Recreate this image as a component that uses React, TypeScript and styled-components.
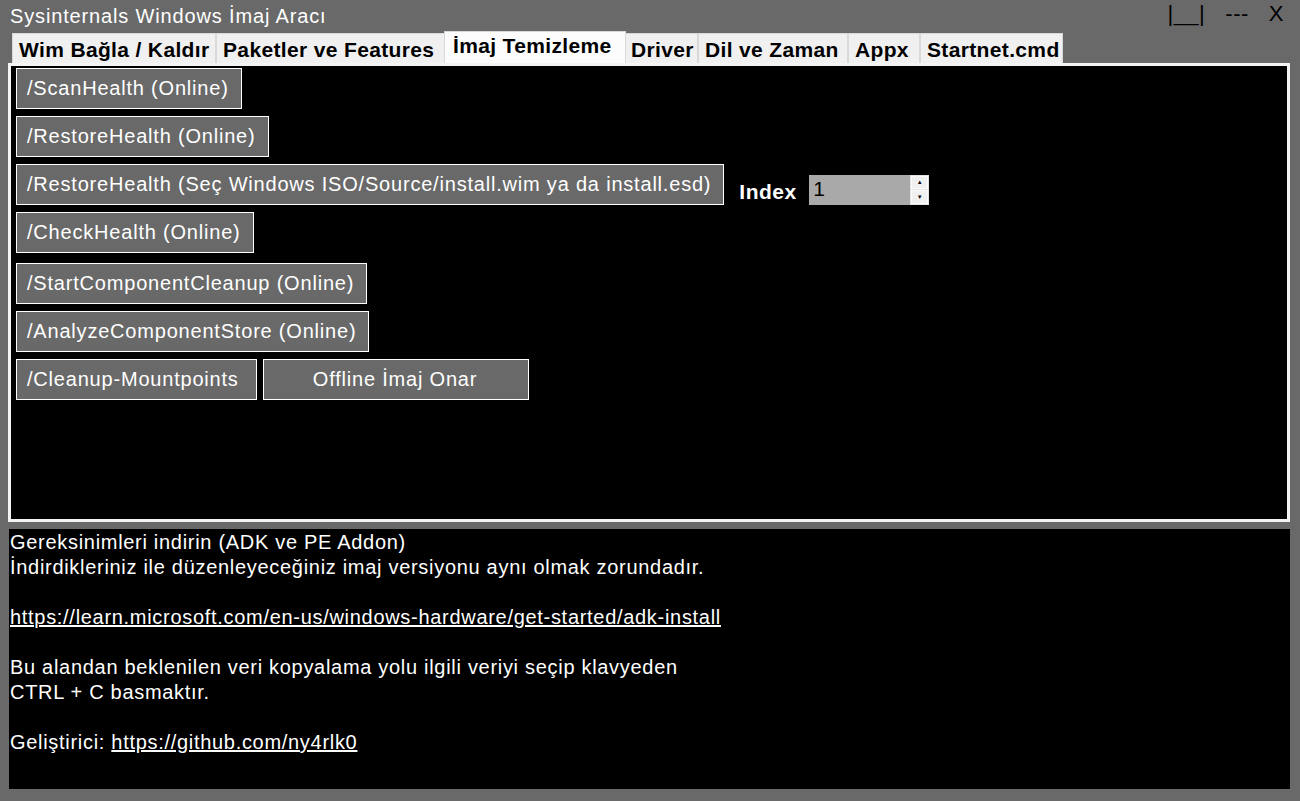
import React, { useState } from 'react'
import styled, { createGlobalStyle } from 'styled-components';

const GlobalStyle = createGlobalStyle`
    html, body {
        margin: 0;
        padding: 0;
        background: #696969;
    }
    #root {
        width: 1300px;
        height: 801px;
    }
`

const tabs = [
    { name: 'Wim Bağla / Kaldır', width: 204 },
    { name: 'Paketler ve Features', width: 230 },
    { name: 'İmaj Temizleme', width: 178 },
    { name: 'Driver', width: 74 },
    { name: 'Dil ve Zaman', width: 150 },
    { name: 'Appx', width: 72 },
    { name: 'Startnet.cmd', width: 143 },
]

export default function App() {

    const [activeTab, setActiveTab] = useState(2);
    const [index, setIndex] = useState(1);

    return (
        <Main>
            <GlobalStyle />
            <TitleBar>
                <Title>Sysinternals Windows İmaj Aracı</Title>
                <WindowButtons>
                    <WindowButton>|__|</WindowButton>
                    <WindowButton>---</WindowButton>
                    <WindowButton>X</WindowButton>
                </WindowButtons>
            </TitleBar>
            <TabStrip>
                {tabs.map((tab, key) => (
                    <Tab key={key} $width={tab.width} $active={key === activeTab} onClick={() => setActiveTab(key)}>
                        {tab.name}
                    </Tab>
                ))}
            </TabStrip>
            <TabPanel>
                <ButtonRow>
                    <ToolButton>/ScanHealth (Online)</ToolButton>
                </ButtonRow>
                <ButtonRow>
                    <ToolButton>/RestoreHealth (Online)</ToolButton>
                </ButtonRow>
                <ButtonRow>
                    <ToolButton>/RestoreHealth (Seç Windows ISO/Source/install.wim ya da install.esd)</ToolButton>
                    <IndexLabel>Index</IndexLabel>
                    <NumberBox>
                        <NumberValue>{index}</NumberValue>
                        <Spinner>
                            <SpinButton onClick={() => setIndex(index + 1)}>▲</SpinButton>
                            <SpinButton onClick={() => setIndex(index > 1 ? index - 1 : 1)}>▼</SpinButton>
                        </Spinner>
                    </NumberBox>
                </ButtonRow>
                <ButtonRow>
                    <ToolButton>/CheckHealth (Online)</ToolButton>
                </ButtonRow>
                <ButtonRow $top={3}>
                    <ToolButton>/StartComponentCleanup (Online)</ToolButton>
                </ButtonRow>
                <ButtonRow>
                    <ToolButton>/AnalyzeComponentStore (Online)</ToolButton>
                </ButtonRow>
                <ButtonRow>
                    <ToolButton $width={241}>/Cleanup-Mountpoints</ToolButton>
                    <ToolButton $width={266} $center>Offline İmaj Onar</ToolButton>
                </ButtonRow>
            </TabPanel>
            <InfoBox>
                <Line>Gereksinimleri indirin (ADK ve PE Addon)</Line>
                <Line>İndirdikleriniz ile düzenleyeceğiniz imaj versiyonu aynı olmak zorundadır.</Line>
                <Line>&nbsp;</Line>
                <Line><Link>https://learn.microsoft.com/en-us/windows-hardware/get-started/adk-install</Link></Line>
                <Line>&nbsp;</Line>
                <Line>Bu alandan beklenilen veri kopyalama yolu ilgili veriyi seçip klavyeden</Line>
                <Line>CTRL + C basmaktır.</Line>
                <Line>&nbsp;</Line>
                <Line>Geliştirici: <Link>https://github.com/ny4rlk0</Link></Line>
            </InfoBox>
        </Main>
    )
}

const Main = styled.div`
    width: 1300px;
    height: 801px;
    background: #696969;
    font-family: "Liberation Sans", Arial, sans-serif;
    display: flex;
    flex-direction: column;
    overflow: hidden;
`

const TitleBar = styled.div`
    height: 31px;
    display: flex;
    align-items: center;
    justify-content: space-between;
    padding: 0 16px 0 10px;
`

const Title = styled.div`
    color: #ffffff;
    font-size: 20px;
    letter-spacing: 0.85px;
    margin-top: 1px;
`

const WindowButtons = styled.div`
    display: flex;
    gap: 20px;
    margin-top: -3px;
`

const WindowButton = styled.div`
    color: #000000;
    font-size: 22px;
    letter-spacing: 0.5px;
`

const TabStrip = styled.div`
    display: flex;
    align-items: flex-end;
    height: 32px;
    padding-left: 12px;
`

const Tab = styled.div<{ $width: number; $active: boolean }>`
    width: ${p => p.$width + (p.$active ? 4 : 0)}px;
    height: ${p => (p.$active ? 32 : 30)}px;
    box-sizing: border-box;
    background: ${p => (p.$active ? '#fcfcfc' : '#f0f0f0')};
    border: 1px solid #d9d9d9;
    border-bottom: none;
    margin: ${p => (p.$active ? '0 -2px' : '0')};
    padding: ${p => (p.$active ? '2px 0 0 8px' : '4px 0 0 6px')};
    font-size: 21px;
    font-weight: bold;
    letter-spacing: 0.35px;
    color: #000000;
    white-space: nowrap;
    overflow: hidden;
    cursor: default;
    position: relative;
    z-index: ${p => (p.$active ? 1 : 0)};
`

const TabPanel = styled.div`
    margin-left: 8px;
    width: 1282px;
    height: 459px;
    box-sizing: border-box;
    background: #000000;
    border: 3px solid #f4f4f4;
    padding: 2px 5px;
    display: flex;
    flex-direction: column;
    gap: 7px;
`

const ButtonRow = styled.div<{ $top?: number }>`
    display: flex;
    align-items: center;
    gap: 6px;
    margin-top: ${p => p.$top ?? 0}px;
`

const ToolButton = styled.button<{ $width?: number; $center?: boolean }>`
    height: 41px;
    ${p => (p.$width ? `width: ${p.$width}px;` : '')}
    box-sizing: border-box;
    background: #696969;
    border: 1px solid #ffffff;
    color: #ffffff;
    font-family: "Liberation Sans", Arial, sans-serif;
    font-size: 20px;
    letter-spacing: 0.8px;
    padding: 0 12px 0 10px;
    text-align: ${p => (p.$center ? 'center' : 'left')};
    white-space: nowrap;
    cursor: pointer;
`

const IndexLabel = styled.div`
    color: #ffffff;
    font-weight: bold;
    font-size: 21px;
    letter-spacing: 0.5px;
    margin: 14px 0 0 9px;
    width: 64px;
`

const NumberBox = styled.div`
    width: 120px;
    height: 30px;
    box-sizing: border-box;
    background: #a9a9a9;
    margin-top: 10px;
    display: flex;
    justify-content: space-between;
    align-items: stretch;
`

const NumberValue = styled.div`
    color: #000000;
    font-size: 21px;
    padding: 2px 0 0 4px;
`

const Spinner = styled.div`
    width: 17px;
    display: flex;
    flex-direction: column;
    border: 1px solid #e3e3e3;
    background: #e3e3e3;
    gap: 1px;
`

const SpinButton = styled.div`
    flex: 1;
    background: #f0f0f0;
    border: 1px solid #fcfcfc;
    font-size: 6px;
    color: #000000;
    display: flex;
    align-items: center;
    justify-content: center;
    line-height: 1;
`

const InfoBox = styled.div`
    margin: 7px 0 0 9px;
    width: 1281px;
    height: 260px;
    box-sizing: border-box;
    background: #000000;
    padding: 1px 0 0 1px;
    color: #ffffff;
    font-size: 20px;
    letter-spacing: 0.7px;
`

const Line = styled.div`
    height: 25px;
    line-height: 25px;
    white-space: nowrap;
`

const Link = styled.span`
    text-decoration: underline;
    color: #ffffff;
`
